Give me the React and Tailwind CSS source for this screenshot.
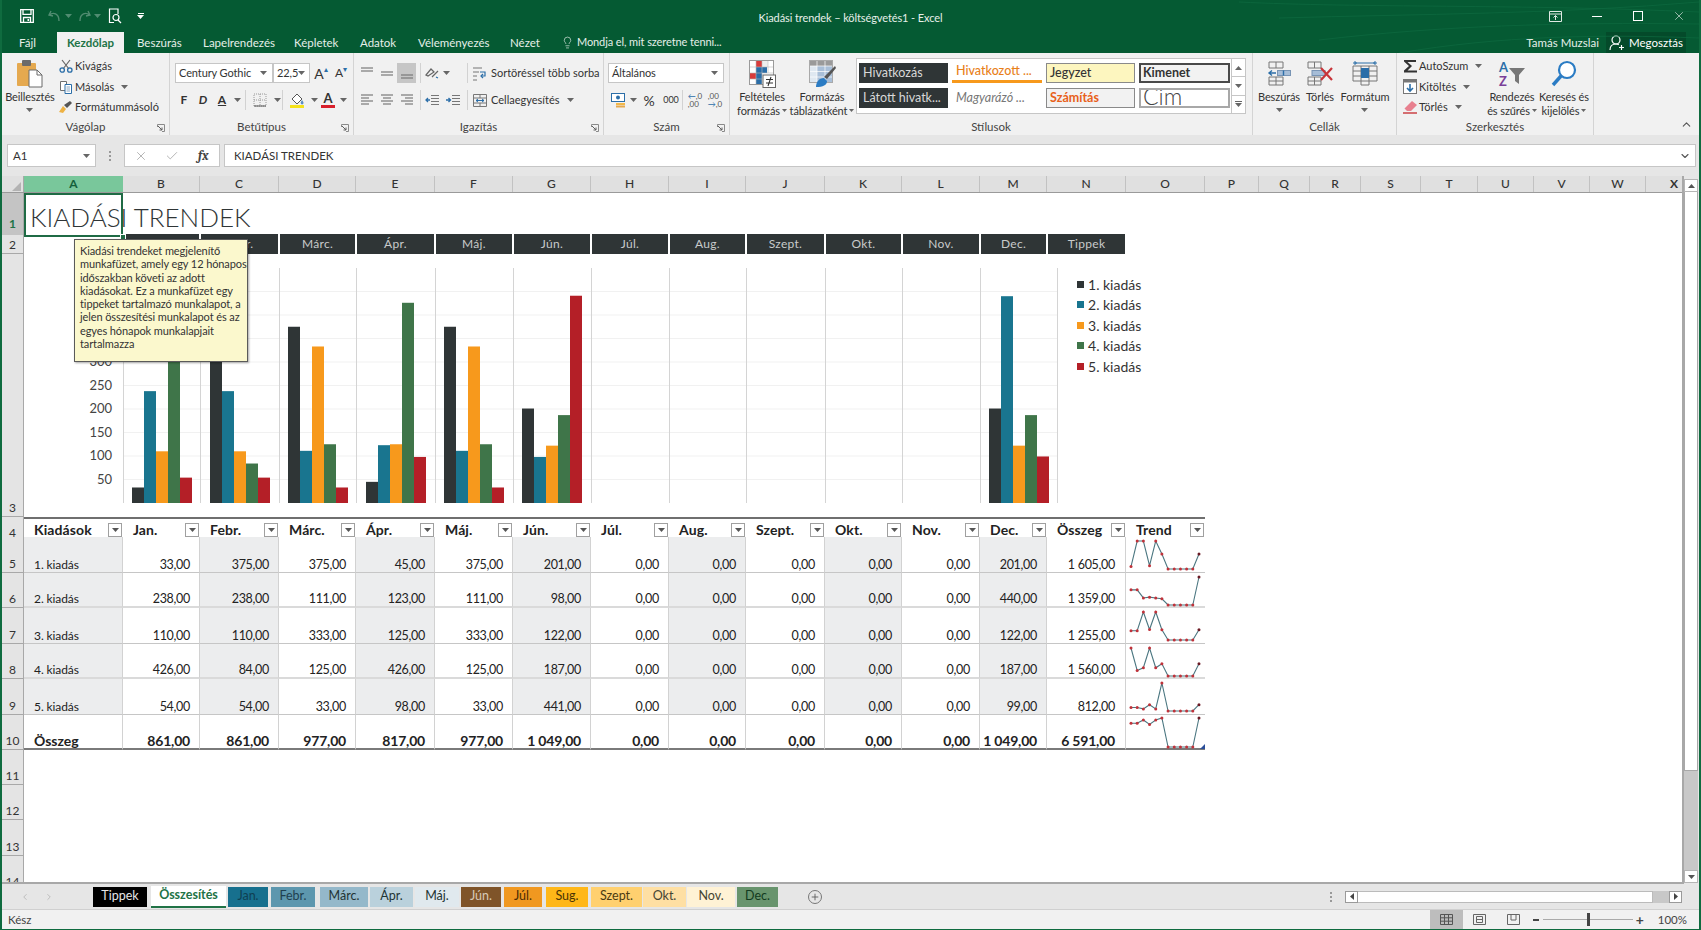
import React from 'react';
import { Lightbulb, X, Check, ChevronUp, ChevronDown, Plus, ChevronLeft, ChevronRight } from 'lucide-react';

const COLS = 'grid grid-cols-[22px_99px_77px_79px_77px_79px_78px_78px_78px_77px_79px_77px_78px_67px_79px_79px_54px_51px_51px_60px_57px_56px_56px_56px_35px]';
const LETTERS = 'ABCDEFGHIJKLMNOPQRSTUVWX'.split('');
const MONTHS = ['Jan.', 'Febr.', 'Márc.', 'Ápr.', 'Máj.', 'Jún.', 'Júl.', 'Aug.', 'Szept.', 'Okt.', 'Nov.', 'Dec.'];
const BAR_COLORS = ['#2f3536', '#19758f', '#f7991c', '#3f7549', '#b41f27'];

const DATA = [
	[33, 375, 375, 45, 375, 201, 0, 0, 0, 0, 0, 201],
	[238, 238, 111, 123, 111, 98, 0, 0, 0, 0, 0, 440],
	[110, 110, 333, 125, 333, 122, 0, 0, 0, 0, 0, 122],
	[426, 84, 125, 426, 125, 187, 0, 0, 0, 0, 0, 187],
	[54, 54, 33, 98, 33, 441, 0, 0, 0, 0, 0, 99],
];
const TOTALS = ['1 605,00', '1 359,00', '1 255,00', '1 560,00', '812,00'];
const SUMS = [861, 861, 977, 817, 977, 1049, 0, 0, 0, 0, 0, 1049];
const TOOLTIP = [
	'Kiadási trendeket megjelenítő',
	'munkafüzet, amely egy 12 hónapos',
	'időszakban követi az adott',
	'kiadásokat. Ez a munkafüzet egy',
	'tippeket tartalmazó munkalapot, a',
	'jelen összesítési munkalapot és az',
	'egyes hónapok munkalapjait',
	'tartalmazza',
];

const fmt = (n) => {
	const s = n.toFixed(2).replace('.', ',');
	return n >= 1000 ? s[0] + ' ' + s.slice(1) : s;
};

const Caret = ({ c = '#666' }) => (
	<svg width="7" height="4" viewBox="0 0 7 4" className="shrink-0"><path d="M0 0h7L3.5 4z" fill={c} /></svg>
);

const TinyCaret = () => (
	<svg width="5" height="3" viewBox="0 0 5 3" className="shrink-0"><path d="M0 0h5L2.5 3z" fill="#666" /></svg>
);

const Sep = () => <div className="mx-[1px] h-[20px] w-px shrink-0 bg-[#d2d2d2]" />;

const Launcher = () => (
	<svg width="8" height="8" viewBox="0 0 8 8" className="absolute bottom-[3px] right-[4px]">
		<path d="M.5 3V.5H7.5V7.5H5" fill="none" stroke="#8a8a8a" />
		<path d="M1 2l4 4M5 3.5V6H2.5" fill="none" stroke="#5f5f5f" />
	</svg>
);

const Group = ({ width, label, launcher, children }) => (
	<div className={`relative flex shrink-0 flex-col border-r border-[#d4d4d4] ${width}`}>
		<div className="flex min-h-0 flex-1">{children}</div>
		<div className="h-[15px] text-center text-[11.5px] leading-[14px] text-[#444]">{label}</div>
		{launcher && <Launcher />}
	</div>
);

const BigButton = ({ width, icon, lines, caretBelow }) => (
	<div className={`flex shrink-0 flex-col items-center ${width}`}>
		<div className="mt-[7px] flex h-[27px] items-center justify-center">{icon}</div>
		<div className="mt-[3px] whitespace-nowrap text-center text-[11px] leading-[13.5px] tracking-[-0.1px] text-[#333]">
			{lines.map((l, i) => (
				<div key={l} className="flex items-center justify-center gap-[2px]">
					{l}
					{!caretBelow && i === lines.length - 1 && <TinyCaret />}
				</div>
			))}
			{caretBelow && <div className="flex h-[13.5px] items-center justify-center"><Caret /></div>}
		</div>
	</div>
);

/* ---------- icons ---------- */

const PasteIcon = () => (
	<svg width="28" height="29" viewBox="0 0 28 29">
		<rect x="1" y="4" width="19" height="23" rx="1" fill="#e5a94f" />
		<rect x="6" y="1" width="9" height="6" rx="1" fill="#6b6b6b" />
		<path d="M13 11h8l5 5v12H13z" fill="#fff" stroke="#6b6b6b" />
		<path d="M21 11v5h5" fill="none" stroke="#6b6b6b" />
	</svg>
);
const ScissorsIcon = () => (
	<svg width="14" height="14" viewBox="0 0 14 14" fill="none">
		<path d="M3 1l7 9M11 1L4 10" stroke="#666" strokeWidth="1.2" />
		<circle cx="3.2" cy="11" r="2.2" stroke="#2b6ea8" strokeWidth="1.3" />
		<circle cx="10.8" cy="11" r="2.2" stroke="#2b6ea8" strokeWidth="1.3" />
	</svg>
);
const CopyIcon = () => (
	<svg width="14" height="14" viewBox="0 0 14 14" fill="none">
		<path d="M1.5 1.5h6v9h-6z" fill="#fff" stroke="#6f6f6f" />
		<path d="M6 4.5h6.5v9H6z" fill="#fff" stroke="#2b6ea8" />
		<path d="M7.5 7h3.5M7.5 9h3.5M7.5 11h3.5" stroke="#8aa8c4" />
	</svg>
);
const BrushIcon = () => (
	<svg width="16" height="14" viewBox="0 0 16 14">
		<path d="M1 12l4-6 3 3-3 4z" fill="#eeb243" />
		<path d="M6 5l3 3 5-5-2-2z" fill="#555" />
	</svg>
);
const SaveIcon = () => (
	<svg width="14" height="14" viewBox="0 0 14 14" fill="none" stroke="#fff" strokeWidth="1.3">
		<path d="M.7.7h12.6v12.6H.7z" />
		<path d="M3 .7v4.6h8V.7M3.5 13.3V8.5h7v4.8" />
		<rect x="7.5" y="10" width="1.6" height="2" fill="#fff" stroke="none" />
	</svg>
);
const PreviewIcon = () => (
	<svg width="14" height="16" viewBox="0 0 14 16" fill="none" stroke="#fff" strokeWidth="1.2">
		<path d="M10 6V1H1.5v13.5H6" />
		<circle cx="8" cy="9.5" r="3" />
		<path d="M10 12l3 3" />
	</svg>
);
const Lines = ({ rows, highlight }) => (
	<svg width="14" height="14" viewBox="0 0 14 14" stroke={highlight ? '#777' : '#7a7a7a'} strokeWidth="1.2">
		{rows.map(([x1, x2, y]) => <path key={y} d={`M${x1} ${y}H${x2}`} />)}
	</svg>
);
const WrapIcon = () => (
	<svg width="16" height="15" viewBox="0 0 16 15" fill="none">
		<path d="M1 2h9M1 6h6M1 10h4M1 14h4" stroke="#777" strokeWidth="1.2" />
		<path d="M8 6h5v4H9" stroke="#2b6ea8" strokeWidth="1.2" />
		<path d="M11 8l-2 2 2 2" stroke="#2b6ea8" strokeWidth="1.2" />
	</svg>
);
const MergeIcon = () => (
	<svg width="16" height="15" viewBox="0 0 16 15" fill="none" stroke="#777">
		<path d="M1.5 1.5h13v12h-13zM1.5 5h13M1.5 10h13M8 1.5V5M8 10v3.5" />
		<path d="M4 7.5h8M10 6l2 1.5L10 9M6 6L4 7.5 6 9" stroke="#2b6ea8" />
	</svg>
);
const OrientIcon = () => (
	<svg width="16" height="15" viewBox="0 0 16 15" fill="none" stroke="#666" strokeWidth="1.2">
		<path d="M2 9l5-6 3 3-6 4zM8 11l6-6" />
		<path d="M12 11l2 1" stroke="#2b6ea8" />
	</svg>
);
const IndentIcon = ({ flip }) => (
	<svg width="15" height="13" viewBox="0 0 15 13" fill="none">
		<path d="M6 1.5h8M6 4.5h8M6 7.5h8M6 10.5h8" stroke="#777" />
		<path d={flip ? 'M0 6h4M2.5 4L4.5 6 2.5 8' : 'M5 6H1M3 4L1 6l2 2'} stroke="#2b6ea8" strokeWidth="1.3" />
	</svg>
);
const BorderIcon = () => (
	<svg width="14" height="14" viewBox="0 0 14 14" fill="none" stroke="#999" strokeDasharray="1 1">
		<path d="M1 1h12v12H1zM7 1v12M1 7h12" />
		<path d="M1 13h12" stroke="#555" strokeDasharray="none" />
	</svg>
);
const FillIcon = () => (
	<svg width="16" height="16" viewBox="0 0 16 16">
		<path d="M3 7l5-5 5 5-5 5z" fill="#fff" stroke="#555" />
		<path d="M13 8c1 1.5 1.5 2 1.5 3a1.4 1.4 0 01-2.8 0c0-1 .5-1.500 1.300-3z" fill="#5b8ec4" />
		<rect x="1" y="13" width="14" height="3" fill="#f5e21c" />
	</svg>
);
const CurrencyIcon = () => (
	<svg width="16" height="15" viewBox="0 0 16 15">
		<rect x=".5" y=".5" width="13" height="8" fill="#fff" stroke="#2b6ea8" />
		<circle cx="7" cy="4.500" r="2" fill="#2b6ea8" />
		<rect x="5" y="10" width="9" height="2" fill="#f2b84b" />
		<rect x="5" y="12.500" width="9" height="2" fill="#e5a94f" />
	</svg>
);
const CondIcon = () => (
	<svg width="27" height="28" viewBox="0 0 27 28">
		<rect x=".5" y=".5" width="24" height="24" fill="#fff" stroke="#9a9a9a" />
		<rect x="7" y="1" width="6" height="6" fill="#d83b3b" />
		<rect x="7" y="7" width="11" height="6" fill="#2b6ea8" />
		<rect x="1" y="13" width="6" height="6" fill="#d83b3b" />
		<rect x="13" y="1" width="6" height="6" fill="#eee" />
		<rect x="7" y="13" width="6" height="11" fill="#2b6ea8" />
		<path d="M7 1v23M13 1v23M19 1v12M1 7h23M1 13h23M1 19h12" stroke="#bbb" strokeWidth=".6" />
		<rect x="14" y="15" width="12.500" height="12.500" fill="#fff" stroke="#666" />
		<path d="M17 19.500h7M17 23h7M22 17l-3 9" stroke="#333" strokeWidth="1.1" fill="none" />
	</svg>
);
const TableIcon = () => (
	<svg width="27" height="28" viewBox="0 0 27 28">
		<rect x=".5" y=".5" width="23" height="22" fill="#dfe8f1" stroke="#a9a9a9" />
		<rect x="1" y="1" width="22" height="5" fill="#9a9a9a" />
		<rect x="8" y="6" width="15" height="16" fill="#a9bfd8" />
		<path d="M8 1v21M16 1v21M1 6h22M1 11.500h22M1 17h22" stroke="#fff" strokeWidth=".7" />
		<path d="M26 6l1 2-9 11-3-2z" fill="#555" />
		<path d="M7 27c0-5 3-9 8-9l3 3c0 4-4 6-11 6z" fill="#2b7cc4" />
	</svg>
);
const InsertIcon = () => (
	<svg width="25" height="25" viewBox="0 0 25 25" fill="none" stroke="#777">
		<path d="M2 1h14v6H2zM9 1v6M2 16h14v8H2zM9 16v8M2 20h14" />
		<rect x="10.500" y="9.500" width="13" height="5" fill="#a6bdd7" stroke="#7894b4" />
		<path d="M16.500 9.500v5M9 12H2M5 9.500L2 12l3 2.500" stroke="#2b6ea8" strokeWidth="1.4" />
	</svg>
);
const DeleteIcon = () => (
	<svg width="28" height="25" viewBox="0 0 28 25" fill="none" stroke="#777">
		<path d="M2 1h13v6H2zM8.500 1v6M2 16h13v8H2zM8.500 16v8M2 20h13" />
		<rect x="6" y="9.500" width="13" height="5" fill="#a6bdd7" stroke="#7894b4" />
		<path d="M15 7l11 12M26 7L15 19" stroke="#c8353a" strokeWidth="2.200" />
	</svg>
);
const FormatIcon = () => (
	<svg width="26" height="27" viewBox="0 0 26 27" fill="none" stroke="#777">
		<path d="M1 3h24M3 1v4M23 1v4" stroke="#2b6ea8" />
		<path d="M5 3l-2 0M21 3h2" stroke="#2b6ea8" />
		<path d="M1 6h24v15H1zM9 6v15M17 6v15M1 11h24M1 16h24" />
		<rect x="9" y="8" width="8" height="10" fill="#2b6ea8" stroke="none" />
		<path d="M9 21v4h8v-4" />
	</svg>
);
const SigmaIcon = () => (
	<svg width="15" height="14" viewBox="0 0 15 14"><path d="M1 1h12v2H4.500l4.500 4-4.500 4.500H14v2H1v-2l5-4.500-5-4.500z" fill="#333" /></svg>
);
const FillDownIcon = () => (
	<svg width="14" height="15" viewBox="0 0 14 15">
		<rect x=".5" y=".5" width="13" height="14" fill="#fff" stroke="#777" />
		<rect x="1" y="1" width="12" height="2.500" fill="#777" />
		<path d="M7 5v7M4 9l3 3 3-3" fill="none" stroke="#2b6ea8" strokeWidth="1.600" />
	</svg>
);
const EraserIcon = () => (
	<svg width="15" height="14" viewBox="0 0 15 14">
		<path d="M9 1l5 4-6 6H4L1.500 8.500z" fill="#e8808f" />
		<path d="M0 13h14" stroke="#c8353a" strokeWidth="1.400" />
	</svg>
);
const SortIcon = () => (
	<svg width="28" height="28" viewBox="0 0 28 28">
		<text x="1" y="12" fontSize="13" fontWeight="700" fontFamily="Lato, sans-serif" fill="#2b6ea8">A</text>
		<text x="1" y="26" fontSize="13" fontWeight="700" fontFamily="Lato, sans-serif" fill="#7a3f98">Z</text>
		<path d="M11 8h16l-6 7v9l-4-3v-6z" fill="#777" />
	</svg>
);
const SearchIcon = () => (
	<svg width="26" height="27" viewBox="0 0 26 27" fill="none">
		<circle cx="16" cy="10" r="8" stroke="#2b7cc4" strokeWidth="2.200" fill="#fff" />
		<path d="M10 16l-8 9" stroke="#2b7cc4" strokeWidth="3.400" />
	</svg>
);
const ShareIcon = () => (
	<svg width="17" height="16" viewBox="0 0 17 16" fill="none" stroke="#fff" strokeWidth="1.200">
		<circle cx="7" cy="5" r="4" />
		<path d="M1 15c0-4 2.500-6 6-6 1 0 2 .2 2.800.6M12.500 10v5M10 12.500h5" />
	</svg>
);

/* ---------- top of window ---------- */

const TitleBar = () => (
	<div className="relative flex h-[32px] shrink-0 items-center text-white">
		<div className="flex w-[18px]" />
		<SaveIcon />
		<div className="ml-[14px] flex items-center gap-[3px] opacity-30">
			<svg width="14" height="12" viewBox="0 0 14 12" fill="none" stroke="#fff" strokeWidth="1.400"><path d="M3 1L1 5l4 1M1.500 5C5 2 11 3 11 11" /></svg>
			<Caret c="#fff" />
		</div>
		<div className="ml-[5px] flex items-center gap-[3px] opacity-30">
			<svg width="14" height="12" viewBox="0 0 14 12" fill="none" stroke="#fff" strokeWidth="1.400"><path d="M11 1l2 4-4 1M12.500 5C9 2 3 3 3 11" /></svg>
			<Caret c="#fff" />
		</div>
		<div className="ml-[7px]"><PreviewIcon /></div>
		<div className="ml-[15px] flex flex-col items-center gap-[1px]">
			<div className="h-px w-[6px] bg-white" />
			<Caret c="#fff" />
		</div>
		<div className="absolute left-0 right-0 top-[10px] text-center text-[11px] leading-[15px] tracking-[-0.1px] text-[#e6efe9]">Kiadási trendek – költségvetés1 - Excel</div>
		<div className="ml-auto flex items-center text-white">
			<div className="flex w-[41px] justify-center">
				<svg width="13" height="11" viewBox="0 0 13 11" fill="none" stroke="#dfe9e3"><path d="M.5.5h12v10H.5zM.5 3h12" /><path d="M6.500 9V4.500M4.500 6.500l2-2 2 2" /></svg>
			</div>
			<div className="flex w-[41px] justify-center"><div className="h-px w-[10px] bg-white" /></div>
			<div className="flex w-[41px] justify-center"><div className="h-[10px] w-[10px] border border-white" /></div>
			<div className="flex w-[41px] justify-center"><X size={14} strokeWidth={1} /></div>
		</div>
	</div>
);

const TABS = [
	['Fájl', 'w-[55px] pl-[17px]'],
	['Kezdőlap', ''],
	['Beszúrás', 'w-[79px] pl-[13px]'],
	['Lapelrendezés', 'w-[91px]'],
	['Képletek', 'w-[66px]'],
	['Adatok', 'w-[58px]'],
	['Véleményezés', 'w-[92px]'],
	['Nézet', 'w-[57px]'],
];

const TabRow = () => (
	<div className="flex h-[21px] shrink-0 items-center text-[11.5px] text-[#e6efe9]">
		{TABS.map(([t, w]) => t === 'Kezdőlap'
			? <div key={t} className="flex h-[21px] w-[67px] items-center justify-center bg-[#f1f1f1] font-bold text-[#217346]">{t}</div>
			: <div key={t} className={w}>{t}</div>)}
		<Lightbulb size={13} strokeWidth={1.2} className="ml-[-6px] text-[#e6efe9]" />
		<span className="ml-[3px] text-[11px] tracking-[-0.1px]">Mondja el, mit szeretne tenni...</span>
		<div className="ml-auto flex h-[21px] items-center">
			<span className="mr-[7px]">Tamás Muzslai</span>
			<div className="flex h-[21px] w-[80px] items-center justify-center gap-[3px] bg-[#044a2a] text-white">
				<ShareIcon />Megosztás
			</div>
			<div className="w-[13px]" />
		</div>
	</div>
);

const SmallRow = ({ icon, children, pad = '' }) => (
	<div className={`flex h-[20.5px] items-center whitespace-nowrap text-[11px] text-[#333] ${pad}`}>
		<div className="flex w-[16px] shrink-0 justify-center">{icon}</div>
		<div className="ml-[1px] flex items-center gap-[7px]">{children}</div>
	</div>
);

const Select = ({ width, children }) => (
	<div className={`flex h-[20px] shrink-0 items-center justify-between border border-[#c6c6c6] bg-white pl-[3px] pr-[5px] text-[11px] tracking-[-0.1px] text-[#333] ${width}`}>
		<span className="whitespace-nowrap">{children}</span><Caret />
	</div>
);

const Slot = ({ width, className = '', children }) => (
	<div className={`flex h-[20px] shrink-0 items-center justify-center ${width} ${className}`}>{children}</div>
);

const Decimal = ({ top, bottom }) => (
	<div className="flex flex-col text-[8px] leading-[8px] text-[#555]">
		<span>{top}</span><span>{bottom}</span>
	</div>
);

const Ribbon = () => (
	<div className="flex h-[82px] shrink-0 bg-[#f1f1f1]">
		<Group width="w-[168px]" label="Vágólap" launcher>
			<BigButton width="w-[56px]" icon={<PasteIcon />} lines={['Beillesztés']} caretBelow />
			<div className="pt-[3px]">
				<SmallRow icon={<ScissorsIcon />}>Kivágás</SmallRow>
				<SmallRow icon={<CopyIcon />}>Másolás <Caret /></SmallRow>
				<SmallRow icon={<BrushIcon />}>Formátummásoló</SmallRow>
			</div>
		</Group>
		<Group width="w-[184px]" label="Betűtípus" launcher>
			<div className="flex flex-col gap-[7px] pl-[5px] pt-[10px]">
				<div className="flex">
					<Select width="w-[98px]">Century Gothic</Select>
					<Select width="w-[37px]">22,5</Select>
					<Slot width="w-[22px]" className="text-[14px] text-[#333]">A<span className="mb-[8px] text-[8px] text-[#2b6ea8]">▴</span></Slot>
					<Slot width="w-[18px]" className="text-[12px] text-[#333]">A<span className="mb-[8px] text-[8px] text-[#2b6ea8]">▾</span></Slot>
				</div>
				<div className="flex items-center text-[12px] text-[#333]">
					<Slot width="w-[18px]" className="font-bold">F</Slot>
					<Slot width="w-[20px]" className="font-bold italic">D</Slot>
					<Slot width="w-[18px]" className="font-bold underline">A</Slot>
					<Slot width="w-[13px]"><Caret /></Slot>
					<Sep />
					<Slot width="w-[26px]"><BorderIcon /></Slot>
					<Slot width="w-[8px]"><Caret /></Slot>
					<Sep />
					<Slot width="w-[26px]"><FillIcon /></Slot>
					<Slot width="w-[8px]"><Caret /></Slot>
					<Slot width="w-[20px]" className="flex-col text-[13px] font-bold leading-[13px]">A<div className="h-[3px] w-[14px] bg-[#d8202c]" /></Slot>
					<Slot width="w-[10px]"><Caret /></Slot>
				</div>
			</div>
		</Group>
		<Group width="w-[250px]" label="Igazítás" launcher>
			<div className="flex flex-col gap-[7px] pl-[3px] pt-[10px]">
				<div className="flex items-center text-[11px] text-[#333]">
					<Slot width="w-[20px]"><Lines rows={[[1, 13, 2], [1, 13, 5]]} /></Slot>
					<Slot width="w-[20px]"><Lines rows={[[1, 13, 6], [1, 13, 9]]} /></Slot>
					<Slot width="w-[19px]" className="bg-[#c6c6c6]"><Lines rows={[[1, 13, 9], [1, 13, 12]]} highlight /></Slot>
					<div className="w-[3px]" /><Sep />
					<Slot width="w-[30px]" className="gap-[3px]"><OrientIcon /><Caret /></Slot>
					<div className="w-[14px]" /><Sep />
					<Slot width="w-[22px]"><WrapIcon /></Slot>
					<span className="whitespace-nowrap">Sortöréssel több sorba</span>
				</div>
				<div className="flex items-center text-[11px] text-[#333]">
					<Slot width="w-[20px]"><Lines rows={[[1, 13, 2], [1, 9, 5], [1, 13, 8], [1, 9, 11]]} /></Slot>
					<Slot width="w-[20px]"><Lines rows={[[1, 13, 2], [3, 11, 5], [1, 13, 8], [3, 11, 11]]} /></Slot>
					<Slot width="w-[19px]"><Lines rows={[[1, 13, 2], [5, 13, 5], [1, 13, 8], [5, 13, 11]]} /></Slot>
					<div className="w-[3px]" /><Sep />
					<Slot width="w-[21px]"><IndentIcon /></Slot>
					<Slot width="w-[21px]"><IndentIcon flip /></Slot>
					<div className="w-[2px]" /><Sep />
					<Slot width="w-[22px]"><MergeIcon /></Slot>
					<span className="mr-[8px] whitespace-nowrap">Cellaegyesítés</span><Caret />
				</div>
			</div>
		</Group>
		<Group width="w-[126px]" label="Szám" launcher>
			<div className="flex flex-col gap-[7px] pl-[4px] pt-[10px]">
				<Select width="w-[116px]">Általános</Select>
				<div className="flex items-center text-[#333]">
					<Slot width="w-[22px]"><CurrencyIcon /></Slot>
					<Slot width="w-[7px]"><Caret /></Slot>
					<Slot width="w-[24px]" className="text-[14px]">%</Slot>
					<Slot width="w-[20px]" className="text-[9px]">000</Slot>
					<Sep />
					<Slot width="w-[22px]"><Decimal top={<><span className="text-[#2b6ea8]">←</span>,0</>} bottom=",00" /></Slot>
					<Slot width="w-[18px]"><Decimal top=",00" bottom={<><span className="text-[#2b6ea8]">→</span>,0</>} /></Slot>
				</div>
			</div>
		</Group>
		<Group width="w-[523px]" label="Stílusok">
			<BigButton width="ml-[3px] w-[58px]" icon={<CondIcon />} lines={['Feltételes', 'formázás']} />
			<BigButton width="w-[62px]" icon={<TableIcon />} lines={['Formázás', 'táblázatként']} />
			<div className="ml-[3px] mt-[5px] flex h-[56px] w-[390px] border border-[#c6c6c6] bg-white">
				<div className="grid flex-1 grid-cols-[89px_90px_89px_91px] grid-rows-[20px_20px] gap-x-[4px] gap-y-[5px] pl-[2px] pt-[4px] text-[12.5px]">
					<div className="flex items-center bg-[#2f3536] pl-[4px] text-[#d8d8d8]">Hivatkozás</div>
					<div className="flex items-center border-b-[3px] border-[#f7991c] pl-[4px] font-medium text-[#e8801a]">Hivatkozott ...</div>
					<div className="flex items-center border border-[#8a8a8a] bg-[#fdf6bf] pl-[3px] font-medium text-[#333]">Jegyzet</div>
					<div className="flex items-center border-2 border-[#4a4a4a] bg-[#f2f2f2] pl-[2px] font-bold text-[#333]">Kimenet</div>
					<div className="flex items-center bg-[#2f3536] pl-[4px] text-[#d8d8d8]">Látott hivatk...</div>
					<div className="flex items-center pl-[4px] italic text-[#777]">Magyarázó ...</div>
					<div className="flex items-center border border-[#8a8a8a] bg-[#f2f2f2] pl-[3px] font-bold text-[#e8601a]">Számítás</div>
					<div className="flex items-start overflow-hidden border-2 border-[#a8a8a8] pl-[2px] text-[23px] font-light leading-[13px] text-[#444]">Cím</div>
				</div>
				<div className="flex w-[14px] flex-col border-l border-[#c6c6c6] text-[#666]">
					<div className="flex flex-1 items-center justify-center border-b border-[#c6c6c6]"><svg width="7" height="4" viewBox="0 0 7 4"><path d="M0 4h7L3.500 0z" fill="#666" /></svg></div>
					<div className="flex flex-1 items-center justify-center border-b border-[#c6c6c6]"><Caret /></div>
					<div className="flex flex-1 flex-col items-center justify-center gap-[1px]"><div className="h-px w-[7px] bg-[#666]" /><Caret /></div>
				</div>
			</div>
		</Group>
		<Group width="w-[144px]" label="Cellák">
			<BigButton width="ml-[2px] w-[48px]" icon={<InsertIcon />} lines={['Beszúrás']} caretBelow />
			<BigButton width="ml-[2px] w-[30px]" icon={<DeleteIcon />} lines={['Törlés']} caretBelow />
			<BigButton width="w-[60px]" icon={<FormatIcon />} lines={['Formátum']} caretBelow />
		</Group>
		<Group width="w-[197px]" label="Szerkesztés">
			<div className="w-[90px] pl-[5px] pt-[3px]">
				<SmallRow icon={<SigmaIcon />}>AutoSzum <Caret /></SmallRow>
				<SmallRow icon={<FillDownIcon />}>Kitöltés <Caret /></SmallRow>
				<SmallRow icon={<EraserIcon />}>Törlés <Caret /></SmallRow>
			</div>
			<BigButton width="w-[50px]" icon={<SortIcon />} lines={['Rendezés', 'és szűrés']} />
			<BigButton width="w-[54px]" icon={<SearchIcon />} lines={['Keresés és', 'kijelölés']} />
		</Group>
		<div className="flex flex-1 items-end justify-end pb-[4px] pr-[6px]"><ChevronUp size={13} strokeWidth={2} className="text-[#555]" /></div>
	</div>
);

const FormulaBar = () => (
	<div className="flex h-[41px] shrink-0 items-center bg-[#e6e6e6] pr-[3px] pl-[5px] text-[11.5px] text-[#333]">
		<div className="flex h-[23px] w-[89px] items-center justify-between border border-[#c6c6c6] bg-white pl-[5px] pr-[5px]">A1<Caret /></div>
		<div className="flex w-[28px] flex-col items-center gap-[2px]">
			<div className="h-[2px] w-[2px] bg-[#999]" /><div className="h-[2px] w-[2px] bg-[#999]" /><div className="h-[2px] w-[2px] bg-[#999]" />
		</div>
		<div className="flex h-[23px] w-[96px] items-center border border-[#c6c6c6] bg-white text-[#a6a6a6]">
			<div className="flex w-[32px] justify-center"><X size={14} strokeWidth={1.4} /></div>
			<div className="flex w-[32px] justify-center"><Check size={14} strokeWidth={1.4} /></div>
			<div className="flex w-[32px] justify-center font-serif text-[13px] italic font-bold text-[#444]">fx</div>
		</div>
		<div className="ml-[4px] flex h-[23px] flex-1 items-center justify-between border border-[#c6c6c6] bg-white pl-[9px] pr-[4px]">
			KIADÁSI TRENDEK
			<ChevronDown size={12} strokeWidth={2.2} className="text-[#555]" />
		</div>
	</div>
);

/* ---------- sheet ---------- */

const RowHead = ({ n, active, className = '' }) => (
	<div className={`flex items-end justify-center border-b border-r border-[#a8a8a8] text-[12px] leading-[16px] ${active ? 'bg-[#c4c4c4] pb-[4px] font-bold text-[#217346]' : 'bg-[#e4e4e4] text-[#333]'} ${className}`}>{n}</div>
);

const ColumnHeader = () => (
	<div className={`${COLS} h-[17px] border-b border-[#9a9a9a] bg-[#e0e0e0] text-[12px] font-medium leading-[16px] text-[#333]`}>
		<div className="relative border-r border-[#a8a8a8]">
			<svg width="9" height="9" viewBox="0 0 9 9" className="absolute bottom-[1px] right-[2px]"><path d="M9 0v9H0z" fill="#b3b3b3" /></svg>
		</div>
		{LETTERS.map((l, i) => {
			if (i === 0) return <div key={l} className="bg-[#79c79b] text-center font-bold text-[#14603a]">{l}</div>;
			if (l === 'X') return <div key={l} className="pr-[3px] text-right font-bold">{l}</div>;
			return <div key={l} className="border-r border-[#c2c2c2] text-center">{l}</div>;
		})}
	</div>
);

const Plot = () => {
	const edges = [0, 77, 156, 233, 312, 390, 468, 546, 623, 702, 779, 857, 934];
	const scale = 235 / 500;
	const starts = [9, 87, 165, 243, 321, 399, 477, 555, 633, 711, 789, 866];
	return (
		<svg width="935" height="235" viewBox="0 0 935 235" className="shrink-0">
			{[1, 2, 3, 4, 5, 6, 7, 8, 9].map((i) => <path key={i} d={`M0 ${i * 23.5}H934`} stroke="#f1f1f1" />)}
			{edges.map((x) => <path key={x} d={`M${x + 0.5} 0V235`} stroke="#d4d4d4" />)}
			{starts.map((x, m) => DATA.map((row, s) => {
				const h = row[m] * scale;
				return h > 0 ? <rect key={s} x={x + s * 12} y={235 - h} width="12" height={h} fill={BAR_COLORS[s]} /> : null;
			}))}
		</svg>
	);
};

const ChartRow = () => (
	<div className="flex h-[263px]">
		<RowHead n="3" className="h-full w-[22px] shrink-0" />
		<div className="mt-[2px] flex w-[99px] shrink-0 flex-col pr-[11px] text-right text-[13px] text-[#444]">
			{[500, 450, 400, 350, 300, 250, 200, 150, 100, 50].map((v) => (
				<div key={v} className="flex h-[23.5px] items-center justify-end">{v}</div>
			))}
		</div>
		<div className="mt-[14px] h-[235px]"><Plot /></div>
		<div className="ml-[19px] mt-[20px] flex flex-col text-[14px] text-[#333]">
			{BAR_COLORS.map((c, i) => (
				<div key={c} className="flex h-[20.5px] items-center gap-[4px]">
					<span className="h-[7px] w-[7px]" style={{ background: c }} />{i + 1}. kiadás
				</div>
			))}
		</div>
	</div>
);

const Spark = ({ values, top = 4, bottom = 32 }) => {
	const max = Math.max(...values);
	const pts = values.map((v, i) => [5 + i * 6.18, bottom - (v / max) * (bottom - top)]);
	return (
		<svg width="79" height="35" viewBox="0 0 79 35" className="absolute left-0 top-0">
			<polyline points={pts.map((p) => p.join(',')).join(' ')} fill="none" stroke="#4a7680" strokeWidth="1.100" />
			{pts.map(([x, y], i) => <circle key={i} cx={x} cy={y} r="1.500" fill={i === 11 ? '#6b1a24' : '#c0323a'} />)}
		</svg>
	);
};

const FilterBtn = () => (
	<div className="flex h-[14px] w-[14px] shrink-0 items-center justify-center border border-[#a0a0a0] bg-white"><Caret c="#555" /></div>
);

const HeadCell = ({ children }) => (
	<div className="flex items-center justify-between border-t-2 border-[#6f6f6f] pb-[2px] pl-[10px] pr-[1px] text-[14px] font-bold tracking-[0.1px] text-[#222]">
		<span>{children}</span><FilterBtn />
	</div>
);

const TableHead = () => (
	<div className={`${COLS} h-[20px]`}>
		<RowHead n="4" />
		<HeadCell>Kiadások</HeadCell>
		{MONTHS.map((m) => <HeadCell key={m}>{m}</HeadCell>)}
		<HeadCell>Összeg</HeadCell>
		<HeadCell>Trend</HeadCell>
	</div>
);

const ROW_STYLE = [
	'border-b border-[#c6c6c6]',
	'border-b-2 border-[#dadada]',
	'border-b border-[#c6c6c6]',
	'border-b-2 border-[#dadada]',
	'border-b border-[#c6c6c6]',
];

const DataRow = ({ index }) => {
	const values = DATA[index];
	return (
		<div className={`${COLS} h-[35.5px]`}>
			<RowHead n={index + 5} />
			<div className={`flex items-end border-r border-r-[#d2d2d2] bg-[#ecedee] pl-[10px] text-[12px] leading-[14px] tracking-[-0.1px] text-[#222] ${ROW_STYLE[index]}`}>{index + 1}. kiadás</div>
			{values.map((v, m) => (
				<div key={m} className={`flex items-end justify-end border-r border-r-[#d2d2d2] pr-[9px] text-[12.5px] leading-[14px] tracking-[-0.3px] text-[#222] ${m % 2 === 1 ? 'bg-[#ecedee]' : ''} ${ROW_STYLE[index]}`}>{fmt(v)}</div>
			))}
			<div className={`flex items-end justify-end border-r border-r-[#d2d2d2] pr-[10px] text-[12.5px] leading-[14px] tracking-[-0.3px] text-[#222] ${ROW_STYLE[index]}`}>{TOTALS[index]}</div>
			<div className={`relative ${ROW_STYLE[index]}`}><Spark values={values} /></div>
		</div>
	);
};

const TotalRow = () => (
	<div className={`${COLS} h-[35px]`}>
		<RowHead n="10" />
		<div className="flex items-end border-b-2 border-r border-[#7a7a7a] border-r-[#d2d2d2] pl-[10px] text-[14px] font-bold leading-[15px] text-[#222]">Összeg</div>
		{SUMS.map((v, m) => (
			<div key={m} className="flex items-end justify-end border-b-2 border-r border-[#7a7a7a] border-r-[#d2d2d2] pr-[9px] text-[14px] font-bold leading-[15px] tracking-[-0.2px] text-[#222]">{fmt(v)}</div>
		))}
		<div className="flex items-end justify-end border-b-2 border-r border-[#7a7a7a] border-r-[#d2d2d2] pr-[10px] text-[14px] font-bold leading-[15px] tracking-[-0.2px] text-[#222]">6 591,00</div>
		<div className="relative border-b-2 border-[#7a7a7a]">
			<Spark values={SUMS} top={3} bottom={32} />
			<svg width="5" height="5" viewBox="0 0 5 5" className="absolute bottom-[-1px] right-0"><path d="M5 0v5H0z" fill="#2b4e9a" /></svg>
		</div>
	</div>
);

const TopRows = () => (
	<>
		<div className={`${COLS} h-[42px]`}>
			<RowHead n="1" active />
			<div className="relative flex items-center whitespace-nowrap pl-[6px] pt-[5px] text-[26px] font-light text-[#2f3536]">
				KIADÁSI TRENDEK
				<div className="absolute inset-0 border-2 border-[#1f6b45]" />
				<div className="absolute bottom-[-3px] right-[-3px] h-[6px] w-[6px] border border-white bg-[#1f6b45]" />
				<div className="absolute left-[50px] top-[46px] z-20 h-[123px] w-[174px] border border-[#5a5a5a] bg-[#fbf8cd] py-[4px] pl-[5px] pr-[2px] text-[11px] font-normal leading-[13.300px] tracking-[-0.1px] text-[#333] shadow-[1px_1px_2px_rgba(0,0,0,.35)]">
					{TOOLTIP.map((l) => <div key={l}>{l}</div>)}
				</div>
			</div>
		</div>
		<div className={`${COLS} h-[19px]`}>
			<RowHead n="2" />
			<div />
			{[...MONTHS, 'Tippek'].map((m) => (
				<div key={m} className="ml-[1px] mr-[1px] mt-[-1px] flex items-center justify-center bg-[#2f3536] text-[12px] tracking-[0.3px] text-[#c9cbcb]">{m}</div>
			))}
		</div>
	</>
);

const EmptyRow = ({ n, h }) => (
	<div className={`${COLS} ${h}`}><RowHead n={n} /></div>
);

const VScroll = () => (
	<div className="flex w-[15px] shrink-0 flex-col bg-[#e6e6e6] pb-[1px] pr-[1px] pt-[3px]">
		<div className="flex h-[13px] shrink-0 items-center justify-center border border-[#b5b5b5] bg-white">
			<svg width="7" height="4" viewBox="0 0 7 4"><path d="M0 4h7L3.500 0z" fill="#555" /></svg>
		</div>
		<div className="h-[579px] shrink-0 border-x border-b border-[#a8a8a8] bg-white" />
		<div className="flex-1 bg-[#c8c8c8]" />
		<div className="flex h-[13px] shrink-0 items-center justify-center border border-[#b5b5b5] bg-white"><Caret c="#555" /></div>
	</div>
);

const Sheet = () => (
	<div className="flex min-h-0 flex-1 bg-[#e6e6e6]">
		<div className="relative min-w-0 flex-1 overflow-hidden border-b-2 border-r-2 border-[#a8a8a8] bg-white">
			<ColumnHeader />
			<TopRows />
			<ChartRow />
			<TableHead />
			{DATA.map((_, i) => <DataRow key={i} index={i} />)}
			<TotalRow />
			<EmptyRow n="11" h="h-[35.5px]" />
			<EmptyRow n="12" h="h-[35px]" />
			<EmptyRow n="13" h="h-[35.5px]" />
			<EmptyRow n="14" h="h-[35px]" />
		</div>
		<VScroll />
	</div>
);

/* ---------- bottom ---------- */

const SHEET_TABS = [
	['Tippek', 'w-[54px] bg-black text-[#e6e6e6] ml-[39px]'],
	['Jan.', 'w-[40px] bg-[#17708e] text-[#0f3f52] ml-[2px]'],
	['Febr.', 'w-[44px] bg-[#5d97ae] text-[#1f3f50] ml-[3px]'],
	['Márc.', 'w-[48px] bg-[#94b8ca] text-[#233] ml-[5px]'],
	['Ápr.', 'w-[43px] bg-[#bad1dc] text-[#233] ml-[2px]'],
	['Máj.', 'w-[44px] bg-[#e0e9ee] text-[#233] ml-[2px]'],
	['Jún.', 'w-[40px] bg-[#7f5429] text-[#d8c9b8] ml-[2px]'],
	['Júl.', 'w-[38px] bg-[#f09820] text-[#4a2c05] ml-[3px]'],
	['Sug.', 'w-[42px] bg-[#ffb718] text-[#4a3405] ml-[4px]'],
	['Szept.', 'w-[51px] bg-[#ffd06f] text-[#4a3a12] ml-[3px]'],
	['Okt.', 'w-[43px] bg-[#fedfa3] text-[#443] ml-[1px]'],
	['Nov.', 'w-[48px] bg-[#fff2d5] text-[#443] ml-[1px]'],
	['Dec.', 'w-[41px] bg-[#68946d] text-[#123a20] ml-[2px]'],
];

const TabStrip = () => (
	<div className="flex h-[25px] shrink-0 items-center bg-[#e6e6e6] text-[12.5px]">
		<div className="flex w-[52px] items-center justify-end gap-[14px] text-[#b5b5b5]">
			<ChevronLeft size={10} /><ChevronRight size={10} />
		</div>
		{SHEET_TABS.map(([t, cls], i) => (
			<React.Fragment key={t}>
				<div className={`flex h-[20px] shrink-0 items-center justify-center ${cls}`}>{t}</div>
				{i === 0 && (
					<div className="ml-[4px] flex h-[22px] w-[75px] shrink-0 items-center justify-center border-b-2 border-[#217346] bg-white pb-[1px] font-bold text-[#217346]">Összesítés</div>
				)}
			</React.Fragment>
		))}
		<div className="ml-[30px] flex h-[14px] w-[14px] items-center justify-center rounded-full border border-[#777] text-[#555]"><Plus size={10} strokeWidth={2} /></div>
		<div className="ml-auto flex items-center">
			<div className="mr-[13px] flex flex-col gap-[2px]">
				<div className="h-[2px] w-[2px] bg-[#999]" /><div className="h-[2px] w-[2px] bg-[#999]" /><div className="h-[2px] w-[2px] bg-[#999]" />
			</div>
			<div className="flex h-[12px] w-[337px] items-stretch">
				<div className="flex w-[13px] items-center justify-center border border-[#9a9a9a] bg-white"><svg width="4" height="7" viewBox="0 0 4 7"><path d="M4 0v7L0 3.500z" fill="#444" /></svg></div>
				<div className="w-[295px] border-y border-r border-[#bbb] bg-white" />
				<div className="w-[16px] bg-[#c8c8c8]" />
				<div className="flex w-[13px] items-center justify-center border border-[#9a9a9a] bg-white"><svg width="4" height="7" viewBox="0 0 4 7"><path d="M0 0v7l4-3.500z" fill="#444" /></svg></div>
			</div>
			<div className="w-[17px]" />
		</div>
	</div>
);

const StatusBar = () => (
	<div className="flex h-[20px] shrink-0 items-center border-t border-[#d0d0d0] bg-[#f1f1f1] text-[11.5px] text-[#444]">
		<span className="ml-[6px]">Kész</span>
		<div className="ml-auto flex h-full items-center">
			<div className="flex h-full w-[33px] items-center justify-center bg-[#bdbdbd]">
				<svg width="13" height="11" viewBox="0 0 13 11" fill="none" stroke="#555"><path d="M.5.5h12v10H.5zM.5 3.800h12M.5 7.200h12M4.500.5v10M8.500.5v10" /></svg>
			</div>
			<div className="flex w-[34px] justify-center">
				<svg width="13" height="11" viewBox="0 0 13 11" fill="none" stroke="#666"><path d="M.5.5h12v10H.5zM3.500 2.500h6v6h-6zM3.500 5.500h6" /></svg>
			</div>
			<div className="flex w-[33px] justify-center">
				<svg width="13" height="11" viewBox="0 0 13 11" fill="none" stroke="#666"><path d="M.5 10.500V.5h12v10zM4 .5v5.500h5V.5" /></svg>
			</div>
			<div className="ml-[3px] flex items-center">
				<div className="h-[2px] w-[6px] bg-[#444]" />
				<div className="relative ml-[4px] h-px w-[90px] bg-[#aaa]">
					<div className="absolute left-[44px] top-[-6px] h-[13px] w-[3px] bg-[#444]" />
				</div>
				<div className="ml-[3px] text-[14px] font-bold leading-[14px] text-[#444]">+</div>
			</div>
			<span className="ml-[14px] mr-[12px] text-[11.5px]">100%</span>
		</div>
	</div>
);

export default function App() {
	return (
		<div className="relative flex h-[930px] w-[1701px] flex-col overflow-hidden border-x-2 border-b border-[#0f6b3f] bg-[#f1f1f1] font-['Lato',sans-serif]">
			<div className="relative bg-[#055a33]">
				<svg width="500" height="53" viewBox="0 0 500 53" className="absolute right-0 top-0" fill="none" stroke="#0e6a40" strokeWidth=".7">
					<path d="M40 2C160 8 320 4 500 12M120 40C240 26 360 22 500 24M200 53C300 36 400 34 500 38M80 18C220 14 360 14 500 2" />
				</svg>
				<TitleBar />
				<TabRow />
			</div>
			<Ribbon />
			<FormulaBar />
			<Sheet />
			<TabStrip />
			<StatusBar />
		</div>
	);
}
